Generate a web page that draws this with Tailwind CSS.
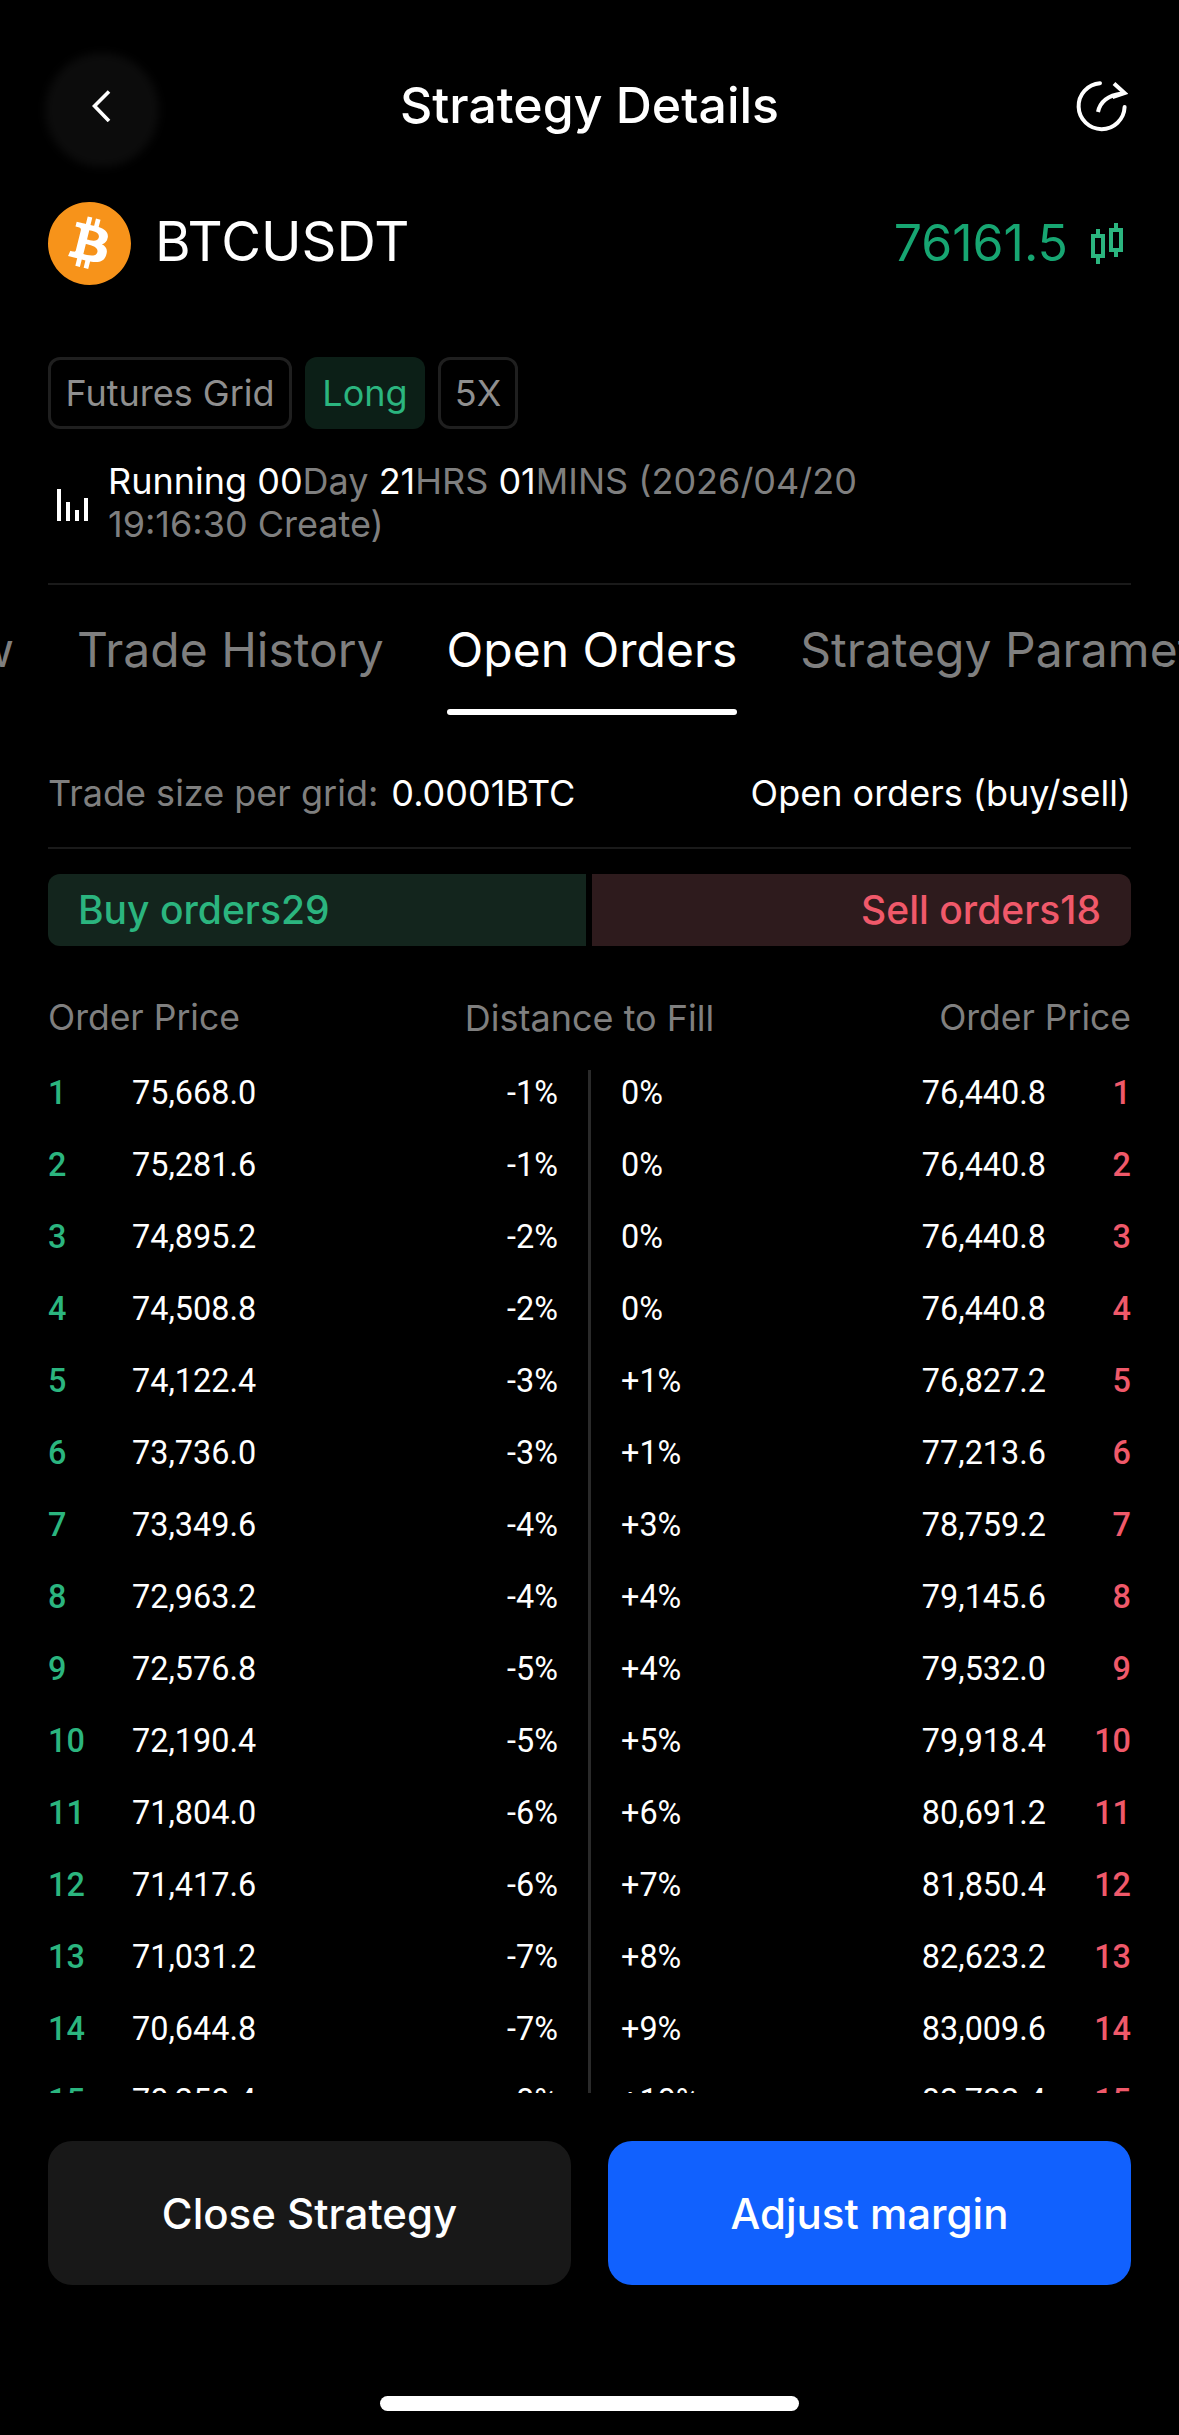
<!DOCTYPE html>
<html lang="en">
<head>
    <meta charset="UTF-8">
    <meta name="viewport" content="width=device-width, initial-scale=1.0">
    <title>Strategy Details</title>
    <script src="https://cdn.jsdelivr.net/npm/@tailwindcss/browser@4"></script>
</head>

<body class="bg-black text-white min-h-screen overflow-hidden font-['Inter',sans-serif]">
    <div class="w-[1179px] h-[2435px] px-[48px] pt-[60px]">

        <!-- Header -->
        <div class="relative h-[90px] flex items-center justify-center">
            <div class="absolute left-[-3px] top-[-7px] w-[114px] h-[114px] rounded-full bg-[#0c0c0c] blur-[4px]"></div>
            <svg class="absolute left-[44px] top-[30px]" width="20" height="32" viewBox="0 0 20 32" fill="none">
                <path d="M17 1.5L2.5 16L17 31" stroke="#fff" stroke-width="3.6"/>
            </svg>
            <h1 class="text-[50px] font-medium leading-[60px]">Strategy Details</h1>
            <svg class="absolute right-[3px] top-[20px]" width="52" height="52" viewBox="0 0 52 52" fill="none">
                <path d="M24 3.2A23 23 0 1 0 48.6 27" stroke="#fff" stroke-width="4" stroke-linecap="round"/>
                <path d="M22 32C24 22 31 15.5 46 13.5" stroke="#fff" stroke-width="4"/>
                <path d="M38 3.5L48.5 13L36.5 17" stroke="#fff" stroke-width="4" fill="none"/>
            </svg>
        </div>

        <!-- Symbol -->
        <div class="mt-[52px] h-[83px] flex items-center">
            <div class="relative w-[83px] h-[83px]">
                <div class="absolute inset-[10px] rounded-full bg-white"></div>
                <svg class="absolute inset-0" width="83" height="83" viewBox="0 0 24 24">
                    <path fill="#f7931a" d="M23.638 14.904c-1.602 6.43-8.113 10.34-14.542 8.736C2.67 22.05-1.244 15.525.362 9.105 1.962 2.67 8.475-1.243 14.9.358c6.43 1.605 10.342 8.115 8.738 14.548v-.002zm-6.35-4.613c.24-1.59-.974-2.45-2.64-3.03l.54-2.153-1.315-.33-.525 2.107c-.345-.087-.705-.167-1.064-.25l.526-2.127-1.32-.33-.54 2.165c-.285-.067-.565-.132-.84-.2l-1.815-.45-.35 1.407s.975.225.955.236c.535.136.63.486.615.766l-1.477 5.92c-.075.166-.24.406-.614.314.015.02-.96-.24-.96-.24l-.66 1.51 1.71.426.93.242-.54 2.19 1.32.327.54-2.17c.36.1.705.19 1.05.273l-.51 2.154 1.32.33.545-2.19c2.24.427 3.93.257 4.64-1.774.57-1.637-.03-2.58-1.217-3.196.854-.193 1.5-.76 1.68-1.93h.01zm-3.01 4.22c-.404 1.64-3.157.75-4.05.53l.72-2.9c.896.23 3.757.67 3.33 2.37zm.41-4.24c-.37 1.49-2.662.735-3.405.55l.654-2.64c.744.18 3.137.524 2.75 2.084v.006z"/>
                </svg>
            </div>
            <span class="ml-[24px] mb-[5px] text-[54.5px] leading-[64px]">BTCUSDT</span>
            <span class="ml-auto mb-[2px] text-[50px] leading-[58px] text-[#17a672]">76161.5</span>
            <svg class="ml-[23px] mr-[7px]" width="33" height="41" viewBox="0 0 33 41" fill="none" stroke="#2bb57f" stroke-width="4">
                <rect x="2" y="13" width="10" height="20"/>
                <path d="M7 6V13M7 33V41"/>
                <rect x="20" y="7" width="10" height="20"/>
                <path d="M25 0V7M25 27V34"/>
            </svg>
        </div>

        <!-- Tags -->
        <div class="mt-[72px] flex gap-[13px] h-[72px] text-[36px]">
            <div class="w-[244px] flex items-center justify-center border-[3px] border-[#1f1f1f] rounded-[12px] text-[#8f8f8f]">Futures Grid</div>
            <div class="w-[120px] flex items-center justify-center rounded-[12px] bg-[#0c1f17] text-[#2bb57f]">Long</div>
            <div class="w-[80px] flex items-center justify-center border-[3px] border-[#1f1f1f] rounded-[12px] text-[#8f8f8f]">5X</div>
        </div>

        <!-- Running time -->
        <div class="mt-[31px] flex items-center">
            <svg class="ml-[9px] mr-[19px] shrink-0 mt-[3px]" width="32" height="32" viewBox="0 0 32 32" fill="#fff">
                <rect x="0" y="0" width="4" height="32"/>
                <rect x="9" y="13" width="4" height="19"/>
                <rect x="18" y="21" width="4" height="11"/>
                <rect x="27" y="9" width="4" height="23"/>
            </svg>
            <p class="w-[800px] text-[36px] leading-[43px] text-[#7f7f7f]"><span class="text-white">Running 00</span>Day <span class="text-white">21</span>HRS <span class="text-white">01</span>MINS (2026/04/20 19:16:30 Create)</p>
        </div>
        <div class="mt-[37px] h-[2px] bg-[#1a1a1a]"></div>

        <!-- Tabs -->
        <div class="ml-[-48px] mr-[-48px] pt-[36px] flex gap-[63px] overflow-hidden text-[48px] leading-[58px] whitespace-nowrap text-[#7f7f7f]">
            <div class="w-[14px] shrink-0 flex justify-end overflow-hidden"><span>Overview</span></div>
            <div>Trade History</div>
            <div class="text-white">
                Open Orders
                <div class="mt-[30px] h-[6px] rounded-[3px] bg-white"></div>
            </div>
            <div>Strategy Parameters</div>
        </div>

        <!-- Trade size -->
        <div class="mt-[56px] flex justify-between text-[36px] leading-[44px]">
            <div><span class="text-[#7f7f7f]">Trade size per grid:</span><span class="ml-[13px]">0.0001BTC</span></div>
            <div>Open orders (buy/sell)</div>
        </div>
        <div class="mt-[32px] h-[2px] bg-[#1a1a1a]"></div>

        <!-- Buy / sell -->
        <div class="mt-[25px] flex justify-between h-[72px] text-[39px] font-medium">
            <div class="w-[538px] flex items-center pl-[30px] rounded-l-[12px] bg-[#13251d] text-[#2bb57f]">Buy orders29</div>
            <div class="w-[539px] flex items-center justify-end pr-[30px] rounded-r-[12px] bg-[#2e1b1d] text-[#f0596a]">Sell orders18</div>
        </div>

        <!-- Table head -->
        <div class="mt-[50px] flex justify-between text-[36px] leading-[44px] text-[#7f7f7f]">
            <div class="text-[35.5px]">Order Price</div>
            <div>Distance to Fill</div>
            <div class="text-[35.5px]">Order Price</div>
        </div>

        <!-- Orders -->
        <div class="mt-[30px] h-[1023px] flex overflow-hidden font-['Roboto',sans-serif] text-[32.4px] leading-[46px]">
            <div id="buyOrders" class="w-[543px] h-full border-r-[3px] border-[#2a2a2a] pr-[30px]"></div>
            <div id="sellOrders" class="flex-1 h-full pl-[30px]"></div>
        </div>

        <!-- Actions -->
        <div class="mt-[48px] flex justify-between text-[42px] font-medium">
            <button class="w-[523px] h-[144px] rounded-[24px] bg-[#181818]">Close Strategy</button>
            <button class="w-[523px] h-[144px] rounded-[24px] bg-[#1161fe]">Adjust margin</button>
        </div>

        <!-- Home indicator -->
        <div class="mt-[111px] mx-auto w-[419px] h-[15px] rounded-full bg-white"></div>
    </div>

    <script>
        const buys = [
            ['75,668.0', '-1%'], ['75,281.6', '-1%'], ['74,895.2', '-2%'], ['74,508.8', '-2%'], ['74,122.4', '-3%'],
            ['73,736.0', '-3%'], ['73,349.6', '-4%'], ['72,963.2', '-4%'], ['72,576.8', '-5%'], ['72,190.4', '-5%'],
            ['71,804.0', '-6%'], ['71,417.6', '-6%'], ['71,031.2', '-7%'], ['70,644.8', '-7%'], ['70,258.4', '-8%']
        ];
        const sells = [
            ['76,440.8', '0%'], ['76,440.8', '0%'], ['76,440.8', '0%'], ['76,440.8', '0%'], ['76,827.2', '+1%'],
            ['77,213.6', '+1%'], ['78,759.2', '+3%'], ['79,145.6', '+4%'], ['79,532.0', '+4%'], ['79,918.4', '+5%'],
            ['80,691.2', '+6%'], ['81,850.4', '+7%'], ['82,623.2', '+8%'], ['83,009.6', '+9%'], ['83,782.4', '+10%']
        ];

        document.getElementById('buyOrders').innerHTML = buys.map((row, i) => `
            <div class="flex h-[46px] mb-[26px]">
                <span class="w-[84px] text-[#2bb57f] font-medium">${i + 1}</span>
                <span>${row[0]}</span>
                <span class="ml-auto">${row[1]}</span>
            </div>`).join('');

        document.getElementById('sellOrders').innerHTML = sells.map((row, i) => `
            <div class="flex h-[46px] mb-[26px]">
                <span>${row[1]}</span>
                <span class="ml-auto">${row[0]}</span>
                <span class="w-[85px] text-right text-[#f0596a] font-medium">${i + 1}</span>
            </div>`).join('');
    </script>
</body>
</html>
